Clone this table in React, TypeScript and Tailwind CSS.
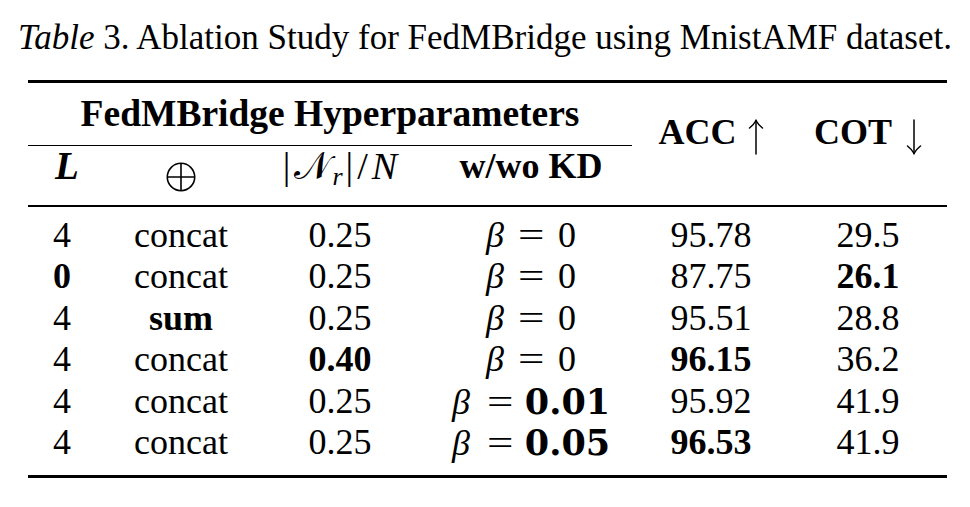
import React from 'react';

type Row = {
  l: string;
  op: string;
  ratio: string;
  beta: string;
  acc: string;
  cot: string;
  bold: Array<'l' | 'op' | 'ratio' | 'beta' | 'acc' | 'cot'>;
};

const rows: Row[] = [
  { l: '4', op: 'concat', ratio: '0.25', beta: '0', acc: '95.78', cot: '29.5', bold: [] },
  { l: '0', op: 'concat', ratio: '0.25', beta: '0', acc: '87.75', cot: '26.1', bold: ['l', 'cot'] },
  { l: '4', op: 'sum', ratio: '0.25', beta: '0', acc: '95.51', cot: '28.8', bold: ['op'] },
  { l: '4', op: 'concat', ratio: '0.40', beta: '0', acc: '96.15', cot: '36.2', bold: ['ratio', 'acc'] },
  { l: '4', op: 'concat', ratio: '0.25', beta: '0.01', acc: '95.92', cot: '41.9', bold: ['beta'] },
  { l: '4', op: 'concat', ratio: '0.25', beta: '0.05', acc: '96.53', cot: '41.9', bold: ['beta', 'acc'] },
];

const cols = 'grid grid-cols-[68px_170px_148px_234px_126px_173px]';

const Arrow: React.FC<{ down?: boolean }> = ({ down }) => (
  <svg
    width="16"
    height="36"
    viewBox="0 0 16 36"
    className={`inline-block relative top-[1px] ${down ? 'ml-[14px] rotate-180' : 'ml-[11px]'}`}
    fill="none"
    stroke="black"
    strokeWidth="1.5"
    strokeLinecap="round"
  >
    <path d="M8 1.5 V35" />
    <path d="M1.5 9 Q6 5.5 8 1.5 Q10 5.5 14.5 9" />
  </svg>
);

// direct-sum operator, thin like the TeX one
const Oplus = () => (
  <svg width="30" height="30" viewBox="0 0 30 30" className="inline-block relative top-[7px]" fill="none" stroke="black" strokeWidth="1.6">
    <circle cx="15" cy="15" r="13.7" />
    <path d="M15 1.3 V28.7 M1.3 15 H28.7" />
  </svg>
);

const Beta: React.FC<{ value: string; bold: boolean }> = ({ value, bold }) => (
  <span className="inline-flex items-baseline">
    <span className="italic">β</span>
    <span className={`${bold ? 'ml-[17px] mr-[12px]' : 'mx-[14px]'} inline-block w-[26px] text-center`}>
      <span className="inline-block scale-x-[1.3]">=</span>
    </span>
    {bold ? (
      <span className="font-['DejaVu_Serif',serif] font-bold text-[35px]">{value}</span>
    ) : (
      <span>{value}</span>
    )}
  </span>
);

export default function App() {
  return (
    <div className="w-[970px] h-[507px] bg-white text-black font-['Liberation_Serif',serif] text-[36px] leading-[40px]">
      <div className="pt-[18px] text-center text-[35px]">
        <span className="italic">Table</span> 3. Ablation Study for FedMBridge using MnistAMF dataset.
      </div>

      <div className="ml-[28px] mt-[22px] w-[919px]">
        <div className="h-[3px] bg-black" />

        {/* header */}
        <div className={`${cols} grid-rows-[62px_1px_59px]`}>
          <div className="col-span-4 pr-[16px] text-center font-bold text-[37.5px] leading-[62px]">
            FedMBridge Hyperparameters
          </div>
          <div className="col-start-5 row-span-3 row-start-1 pt-[29px] text-center font-bold">
            ACC<Arrow />
          </div>
          <div className="col-start-6 row-span-3 row-start-1 pl-[15px] pt-[29px] text-center font-bold">
            COT<Arrow down />
          </div>
          <div className="col-span-4 row-start-2 mr-[16px] bg-black" />
          <div className="row-start-3 pl-[10px] text-center font-bold italic text-[39px]">L</div>
          <div className="row-start-3 text-center">
            <Oplus />
          </div>
          <div className="row-start-3 text-center">
            <span className="inline-flex items-baseline text-[38px]">
              <span>|</span>
              <span className="ml-[4px]">𝒩</span>
              <span className="italic text-[26px] relative top-[6px] ml-[2px]">r</span>
              <span className="ml-[3px]">|</span>
              <span className="ml-[4px]">/</span>
              <span className="italic ml-[4px]">N</span>
            </span>
          </div>
          <div className="row-start-3 text-center font-bold">w/wo KD</div>
        </div>

        <div className="h-[2px] bg-black" />

        {/* body */}
        <div className="pt-[8px] pb-[12px]">
          {rows.map((r, i) => (
            <div key={i} className={`${cols} h-[41.4px] leading-[41px]`}>
              <div className={`text-center ${r.bold.includes('l') ? 'font-bold' : ''}`}>{r.l}</div>
              <div className={`text-center ${r.bold.includes('op') ? 'font-bold' : ''}`}>{r.op}</div>
              <div className={`text-center ${r.bold.includes('ratio') ? 'font-bold' : ''}`}>{r.ratio}</div>
              <div className="text-center">
                <Beta value={r.beta} bold={r.bold.includes('beta')} />
              </div>
              <div className={`text-center ${r.bold.includes('acc') ? 'font-bold' : ''}`}>{r.acc}</div>
              <div className={`pl-[15px] text-center ${r.bold.includes('cot') ? 'font-bold' : ''}`}>{r.cot}</div>
            </div>
          ))}
        </div>

        <div className="h-[3px] bg-black" />
      </div>
    </div>
  );
}
